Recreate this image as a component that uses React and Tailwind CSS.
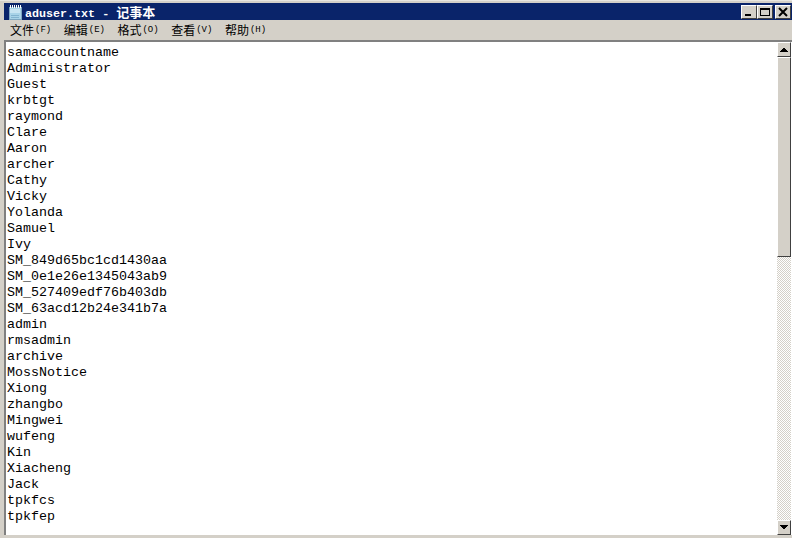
const lines = [
  "samaccountname", "Administrator", "Guest", "krbtgt", "raymond", "Clare", "Aaron", "archer", "Cathy", "Vicky",
  "Yolanda", "Samuel", "Ivy", "SM_849d65bc1cd1430aa", "SM_0e1e26e1345043ab9", "SM_527409edf76b403db", "SM_63acd12b24e341b7a",
  "admin", "rmsadmin", "archive", "MossNotice", "Xiong", "zhangbo", "Mingwei", "wufeng", "Kin", "Xiacheng", "Jack", "tpkfcs", "tpkfep",
];

const menus = [
  ["文件", "(F)"],
  ["编辑", "(E)"],
  ["格式", "(O)"],
  ["查看", "(V)"],
  ["帮助", "(H)"],
];

const raised = "border border-t-white border-l-white border-r-[#404040] border-b-[#404040] bg-[#d4d0c8]";

function WinButton({ children, className = "" }) {
  return (
    <div className={`w-4 h-[14px] flex items-center justify-center ${raised} ${className}`}>
      <svg width="12" height="10" viewBox="0 0 12 10" shapeRendering="crispEdges">{children}</svg>
    </div>
  );
}

function ScrollButton({ down }) {
  return (
    <div className={`w-[14px] h-[15px] shrink-0 flex items-center justify-center ${raised}`}>
      <svg width="8" height="5" viewBox="0 0 8 5" shapeRendering="crispEdges">
        <path d={down ? "M0 0h8L4 5z" : "M4 0l4 5H0z"} fill="#000" />
      </svg>
    </div>
  );
}

export default function App() {
  return (
    <div className="w-[792px] h-[539px] overflow-hidden flex flex-col bg-[#d4d0c8] pt-[2px] pl-1 pb-[3px] border-t border-t-[#e8e6e0] border-b border-b-white">
      <div className="h-[17px] shrink-0 bg-[#0a246a] flex items-center">
        <svg width="16" height="16" viewBox="0 0 16 16" className="ml-[3px] mr-[2px] shrink-0" shapeRendering="crispEdges">
          <path d="M2 3h12v12H2z" fill="#a9d3e8" stroke="#7fa6c0" />
          <path d="M3 5h10v4H3z" fill="#c8e4f2" />
          <path d="M4 11h8M4 13h8" stroke="#84b4d0" />
          <path d="M3 1v3M5 1v3M7 1v3M9 1v3M11 1v3M13 1v3" stroke="#ffffff" />
        </svg>
        <span className="text-white font-bold text-[11.7px] leading-none translate-y-px font-['Liberation_Mono','Noto_Sans_CJK_SC',monospace]">
          aduser.txt - <span className="text-[13px] font-['Noto_Sans_CJK_SC',sans-serif]">记事本</span>
        </span>
        <div className="ml-auto flex items-center mr-px">
          <WinButton><rect x="2" y="7" width="6" height="2" fill="#000" /></WinButton>
          <WinButton>
            <rect x="1.5" y="1.5" width="9" height="7" fill="none" stroke="#000" />
            <rect x="1" y="1" width="10" height="2" fill="#000" />
          </WinButton>
          <WinButton className="ml-[2px]">
            <path d="M2 1l8 8M10 1L2 9" stroke="#000" strokeWidth="2" fill="none" shapeRendering="auto" />
          </WinButton>
        </div>
      </div>

      <div className="h-5 shrink-0 -ml-1 pl-[10px] flex items-center gap-[12.5px] text-[12px] text-black font-['Noto_Sans_CJK_SC',sans-serif]">
        {menus.map(([label, key]) => (
          <span key={label} className="flex items-center leading-none">
            {label}
            <span className="text-[9px] ml-[1px] font-['Liberation_Mono',monospace]">{key}</span>
          </span>
        ))}
      </div>

      <div className="flex-1 min-h-0 flex border-t-2 border-l-2 border-t-[#808080] border-l-[#808080] bg-white">
        <div className="flex-1 pl-px pt-[3px] font-['Liberation_Mono',monospace] text-[13.33px] leading-4 text-black">
          {lines.map((line) => (
            <div key={line} className="h-4 whitespace-pre">{line}</div>
          ))}
        </div>
        <div className="w-[14px] mr-px shrink-0 flex flex-col bg-[repeating-conic-gradient(#d4d0c8_0_25%,#ffffff_0_50%)] bg-[length:2px_2px]">
          <ScrollButton />
          <div className={`h-[200px] shrink-0 ${raised}`} />
          <div className="flex-1" />
          <ScrollButton down />
        </div>
      </div>
    </div>
  );
}
